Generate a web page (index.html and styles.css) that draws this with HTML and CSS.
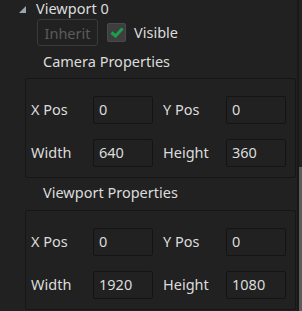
FILE: index.html
```html
<!doctype html>
<html>
<head>
	<title>Viewport</title>
	<meta charset="utf-8">
	<link rel="stylesheet" href="styles.css">
</head>
<body>

	<div class="panel">
		<div class="content">

			<div class="head">
				<span class="branch"></span>
				<span class="title">Viewport 0</span>
			</div>

			<div class="controls">
				<button class="button" disabled>Inherit</button>
				<span class="check">
					<svg width="14" height="11" viewBox="0 0 14 11"><polyline points="1.5,5.5 5.5,9 12.5,1.5" fill="none" stroke="#1b9f4c" stroke-width="3" /></svg>
				</span>
				<span class="text">Visible</span>
			</div>

			<div class="section">Camera Properties</div>
			<div class="group">
				<label>X Pos</label>  <div class="field">0</div>
				<label>Y Pos</label>  <div class="field">0</div>
				<label>Width</label>  <div class="field">640</div>
				<label>Height</label> <div class="field">360</div>
			</div>

			<div class="section">Viewport Properties</div>
			<div class="group">
				<label>X Pos</label>  <div class="field">0</div>
				<label>Y Pos</label>  <div class="field">0</div>
				<label>Width</label>  <div class="field">1920</div>
				<label>Height</label> <div class="field">1080</div>
			</div>

		</div>

		<div class="scrollbar">
			<div class="thumb"></div>
		</div>
	</div>

</body>
</html>
```

FILE: styles.css
```css
* {
	box-sizing: border-box;
}
body {
	margin: 0;
	background: #212121;
	color: #dcdcdc;
	font: 14.5px/16px "Noto Sans", sans-serif;
	overflow: hidden;
}
.panel {
	display: flex;
	height: 311px;
}
.content {
	flex: 1;
}
.head {
	display: flex;
	align-items: flex-start;
	height: 17px;
	padding-left: 19px;
}
.branch { /* expanded tree arrow */
	width: 0;
	height: 0;
	margin-top: 6px;
	border-left: 7px solid transparent;
	border-bottom: 7px solid #9ba6b1;
}
.title {
	margin-left: 10px;
}
.controls {
	display: flex;
	align-items: center;
	margin: 2px 0 0 37px;
	height: 27px;
}
.button {
	width: 61px;
	height: 27px;
	padding: 0;
	border: 1px solid #3a3a3a;
	border-radius: 3px;
	background: #212121;
	color: #5b5b5b;
	font: inherit;
}
.check {
	display: flex;
	align-items: center;
	justify-content: center;
	width: 19px;
	height: 19px;
	margin-left: 9px;
	border: 1px solid #4a4a4a;
	border-radius: 2px;
	background: #3e3e3e;
}
.controls .text {
	margin: -2px 0 0 8px;
}
.section {
	height: 16px;
	margin: 7px 0 9px 43px;
}
.group {
	display: grid;
	grid-template-columns: 62px 60px 73px 60px;
	row-gap: 15px;
	align-items: center;
	width: 271px;
	margin-left: 25px;
	padding: 17px 0 10px 5px;
	border: 1px solid #161616;
	border-radius: 2px;
}
.group + .section {
	margin-top: 6px;
	margin-bottom: 10px;
}
.group label {
	margin-top: -2px;
}
.group label:nth-child(3),
.group label:nth-child(7) {
	padding-left: 10px;
}
.field {
	height: 28px;
	padding: 4px 0 0 5px;
	border: 1px solid #141414;
	border-radius: 2px;
}
.scrollbar {
	display: flex;
	flex-direction: column;
	justify-content: flex-end;
	width: 5px;
	border-left: 2px solid #181818;
	background: #222;
}
.thumb {
	height: 144px;
	background: #5b5b5b;
}
```
